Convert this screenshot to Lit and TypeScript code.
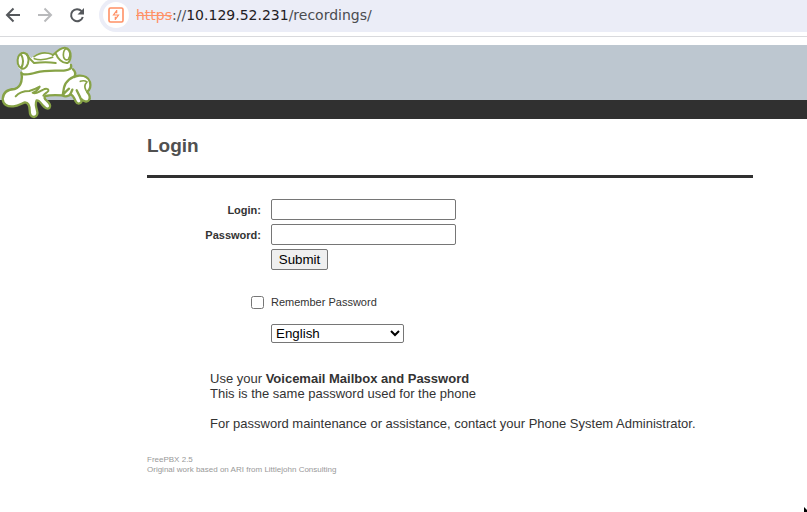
import { LitElement, html, css, svg } from "lit";
import { customElement } from "lit/decorators.js";

@customElement("browser-bar")
class BrowserBar extends LitElement {
  static styles = css`
    :host {
      display: block;
      border-bottom: 1px solid #d9dadd;
      background: #fff;
    }
    .bar {
      display: flex;
      height: 36px;
      overflow: hidden;
    }
    .nav {
      display: flex;
      flex: none;
      gap: 16px;
      padding: 7px 14px 0 5px;
    }
    .btn {
      width: 16px;
      height: 16px;
      padding: 0;
      border: 0;
      background: none;
      color: #55585c;
    }
    .btn:disabled {
      color: #b9babc;
    }
    .btn svg {
      display: block;
    }
    .address {
      display: flex;
      flex: 1;
      align-items: center;
      height: 34px;
      margin: -2px -20px 0 0;
      padding-left: 4px;
      border-radius: 17px;
      background: #ebedf7;
    }
    .site {
      display: grid;
      place-items: center;
      width: 26px;
      height: 26px;
      margin-right: 7px;
      border-radius: 13px;
      background: #fff;
    }
    .url {
      font: 14px/18px "DejaVu Sans", sans-serif;
      color: #4a4c50;
      white-space: nowrap;
    }
    .scheme {
      color: #ff9166;
      text-decoration: line-through;
    }
    .host {
      color: #1f2023;
    }
  `;

  render() {
    return html`
      <div class="bar">
        <div class="nav">
          <button class="btn" aria-label="Back">
            <svg width="16" height="16" viewBox="0 0 16 16" fill="none" stroke="currentColor" stroke-width="2">
              <path d="M15 8H2M8.500 1.500L2 8l6.500 6.500" />
            </svg>
          </button>
          <button class="btn" aria-label="Forward" disabled>
            <svg width="16" height="16" viewBox="0 0 16 16" fill="none" stroke="currentColor" stroke-width="2">
              <path d="M1 8h13M7.500 1.500L14 8l-6.500 6.500" />
            </svg>
          </button>
          <button class="btn" aria-label="Reload">
            <svg width="16" height="16" viewBox="0 0 16 16">
              <path d="M12.600 4.200A6 6 0 1 0 13.800 10" fill="none" stroke="currentColor" stroke-width="2" />
              <path d="M15 1v6.500H8.500z" fill="currentColor" />
            </svg>
          </button>
        </div>
        <div class="address">
          <span class="site">
            <svg width="16" height="16" viewBox="0 0 16 16">
              <rect x="1" y="1" width="14" height="14" rx="1.500" fill="#fff" stroke="#ff9166" stroke-width="1.600" />
              <path d="M8.700 3v3.200M8.500 3.800L5.500 8h5L7.500 12.200M7.300 9.800V13" fill="none" stroke="#ff9166" stroke-width="1.200" />
            </svg>
          </span>
          <span class="url"><span class="scheme">https</span>://<span class="host">10.129.52.231</span>/recordings/</span>
        </div>
      </div>
    `;
  }
}

const frog = svg`
  <g fill="#fff" stroke="#87a346" stroke-width="7" stroke-linejoin="round" stroke-linecap="round">
    <path stroke="none" d="M69 40C58 40 51 52 51 66C51 79 58 88 67 91L64 98C67 108 66 116 64 125C61 136 55 144 44 147C25 148 9 157 8 177C9 194 22 201 40 199C54 198 64 191 75 187C85 188 89 198 89 211C89 223 93 231 102 231C112 230 114 220 111 211C107 199 106 190 110 181C117 180 121 187 128 196C134 204 143 209 149 203C154 196 147 188 140 182C133 177 132 172 136 168C151 164 171 165 188 166C194 171 205 169 212 166C219 165 223 174 227 184C231 193 242 193 245 183L243 176C250 184 262 188 267 180C272 172 267 162 261 155C270 150 273 139 270 126C266 113 252 106 237 107L224 109C227 101 225 93 219 88L213 86C216 80 214 73 208 69C214 61 215 47 211 36C206 23 195 20 184 24C175 28 166 35 158 42C144 36 119 35 104 46L94 55C88 46 80 39 69 40Z" />
    <path fill="none" d="M64 98C67 108 66 116 64 125C61 136 55 144 44 147C25 148 9 157 8 177C9 194 22 201 40 199C54 198 64 191 75 187C85 188 89 198 89 211C89 223 93 231 102 231C112 230 114 220 111 211C107 199 106 190 110 181C117 180 121 187 128 196C134 204 143 209 149 203C154 196 147 188 140 182C133 177 132 172 136 168C151 164 171 165 188 166" />
    <path fill="none" d="M188 166C194 158 200 152 207 146M188 166C196 172 207 168 211 163C219 165 223 174 227 184C231 193 242 193 245 183L239 169L230 151M243 176C250 184 262 188 267 180C272 172 267 162 261 155C270 150 273 139 270 126C266 113 252 106 237 107C213 109 196 125 192 143L188 166" />
    <path fill="none" d="M211 163L217 149M219 88C226 94 228 101 223 111" />
    <path fill="none" d="M241 124C249 121 257 123 261 126C255 132 252 141 258 151" stroke-width="5" />
    <path d="M70 38C84 40 88 55 84 70C80 82 72 88 65 86C53 80 50 64 55 50C59 42 64 38 70 38M63 43C70 55 70 72 64 84" stroke-width="6" />
    <path d="M80 42C86 54 94 62 102 69C124 66 149 66 167 69" fill="none" stroke-width="6" />
    <path d="M102 50C118 38 139 36 156 43M103 56C119 62 139 59 158 52" fill="none" stroke-width="5" />
    <path d="M201 26C211 32 213 48 205 58C197 63 190 56 190 45C190 34 194 25 201 26" stroke-width="5" />
    <path d="M158 46C168 36 181 22 195 23C207 24 213 36 212 49C211 60 208 66 203 69C186 71 173 55 167 40" fill="none" stroke-width="6" />
    <path d="M66 101C77 107 94 102 110 97C139 89 174 94 196 91C207 90 216 86 213 75" fill="none" />
    <path d="M47 169C57 157 72 153 88 153C99 150 109 146 119 140C114 149 106 156 98 158C107 165 117 154 128 150C137 145 146 145 145 153C141 158 133 161 130 167" fill="none" stroke-width="6" />
  </g>
`;

@customElement("app-root")
class AppRoot extends LitElement {
  static styles = css`
    :host {
      display: block;
      font: 13px/15px "Liberation Sans", Arial, sans-serif;
      color: #333;
      background: #fff;
    }
    .banner {
      position: relative;
      margin-top: 8px;
      height: 55px;
      border-bottom: 19px solid #303030;
      background: #bdc7d0;
    }
    .logo {
      position: absolute;
      top: 0;
      left: 0;
    }
    .content {
      margin: 0 54px 0 147px;
    }
    .title {
      margin: 0;
      padding: 16px 0 19px;
      border-bottom: 3px solid #303030;
      font-size: 19px;
      line-height: 21px;
      color: #505050;
    }
    .fields {
      display: grid;
      grid-template-columns: 114px auto;
      justify-content: start;
      justify-items: start;
      align-items: center;
      gap: 4px 10px;
      margin-top: 21px;
    }
    .label {
      justify-self: end;
      padding-top: 2px;
      font-size: 11px;
      font-weight: bold;
    }
    .input,
    .submit,
    .language {
      box-sizing: border-box;
      border: 1px solid #767676;
      border-radius: 2px;
      font-family: "Liberation Sans", Arial, sans-serif;
      color: #000;
    }
    .input {
      width: 185px;
      height: 21px;
      padding: 1px 2px;
      background: #fff;
    }
    .submit {
      grid-column: 2;
      width: 57px;
      height: 21px;
      padding: 0;
      background: #efefef;
    }
    .remember {
      display: flex;
      align-items: center;
      gap: 7px;
      margin: 25px 0 0 104px;
      font-size: 11px;
    }
    .check {
      width: 13px;
      height: 13px;
      margin: 0;
    }
    .language {
      display: block;
      width: 133px;
      height: 19px;
      margin: 14px 0 0 124px;
      padding: 0;
      background: #fff;
    }
    .help {
      margin: 28px 0 0 63px;
    }
    .help p {
      margin: 0 0 15px;
    }
    .footer {
      margin-top: 24px;
      padding-bottom: 16px;
      font-size: 8px;
      line-height: 10px;
      color: #999;
    }
    .pointer {
      position: fixed;
      right: 0;
      bottom: 0;
    }
  `;

  render() {
    return html`
      <browser-bar></browser-bar>
      <header class="banner">
        <svg class="logo" width="100" height="75" viewBox="0 15 300 225" role="img" aria-label="FreePBX">${frog}</svg>
      </header>
      <main class="content">
        <h2 class="title">Login</h2>
        <form @submit=${(e: Event) => e.preventDefault()}>
          <div class="fields">
            <label class="label" for="login">Login:</label>
            <input class="input" id="login" type="text" />
            <label class="label" for="password">Password:</label>
            <input class="input" id="password" type="password" />
            <button class="submit" type="submit">Submit</button>
          </div>
          <div class="remember">
            <input class="check" id="remember" type="checkbox" />
            <label for="remember">Remember Password</label>
          </div>
          <select class="language" aria-label="Language">
            <option>English</option>
          </select>
        </form>
        <div class="help">
          <p>Use your <b>Voicemail Mailbox and Password</b><br />This is the same password used for the phone</p>
          <p>For password maintenance or assistance, contact your Phone System Administrator.</p>
        </div>
        <footer class="footer">FreePBX 2.5<br />Original work based on ARI from Littlejohn Consulting</footer>
      </main>
      <svg class="pointer" width="3" height="5" viewBox="0 0 3 5"><path d="M0 0l3 3v2H0z" /></svg>
    `;
  }
}
